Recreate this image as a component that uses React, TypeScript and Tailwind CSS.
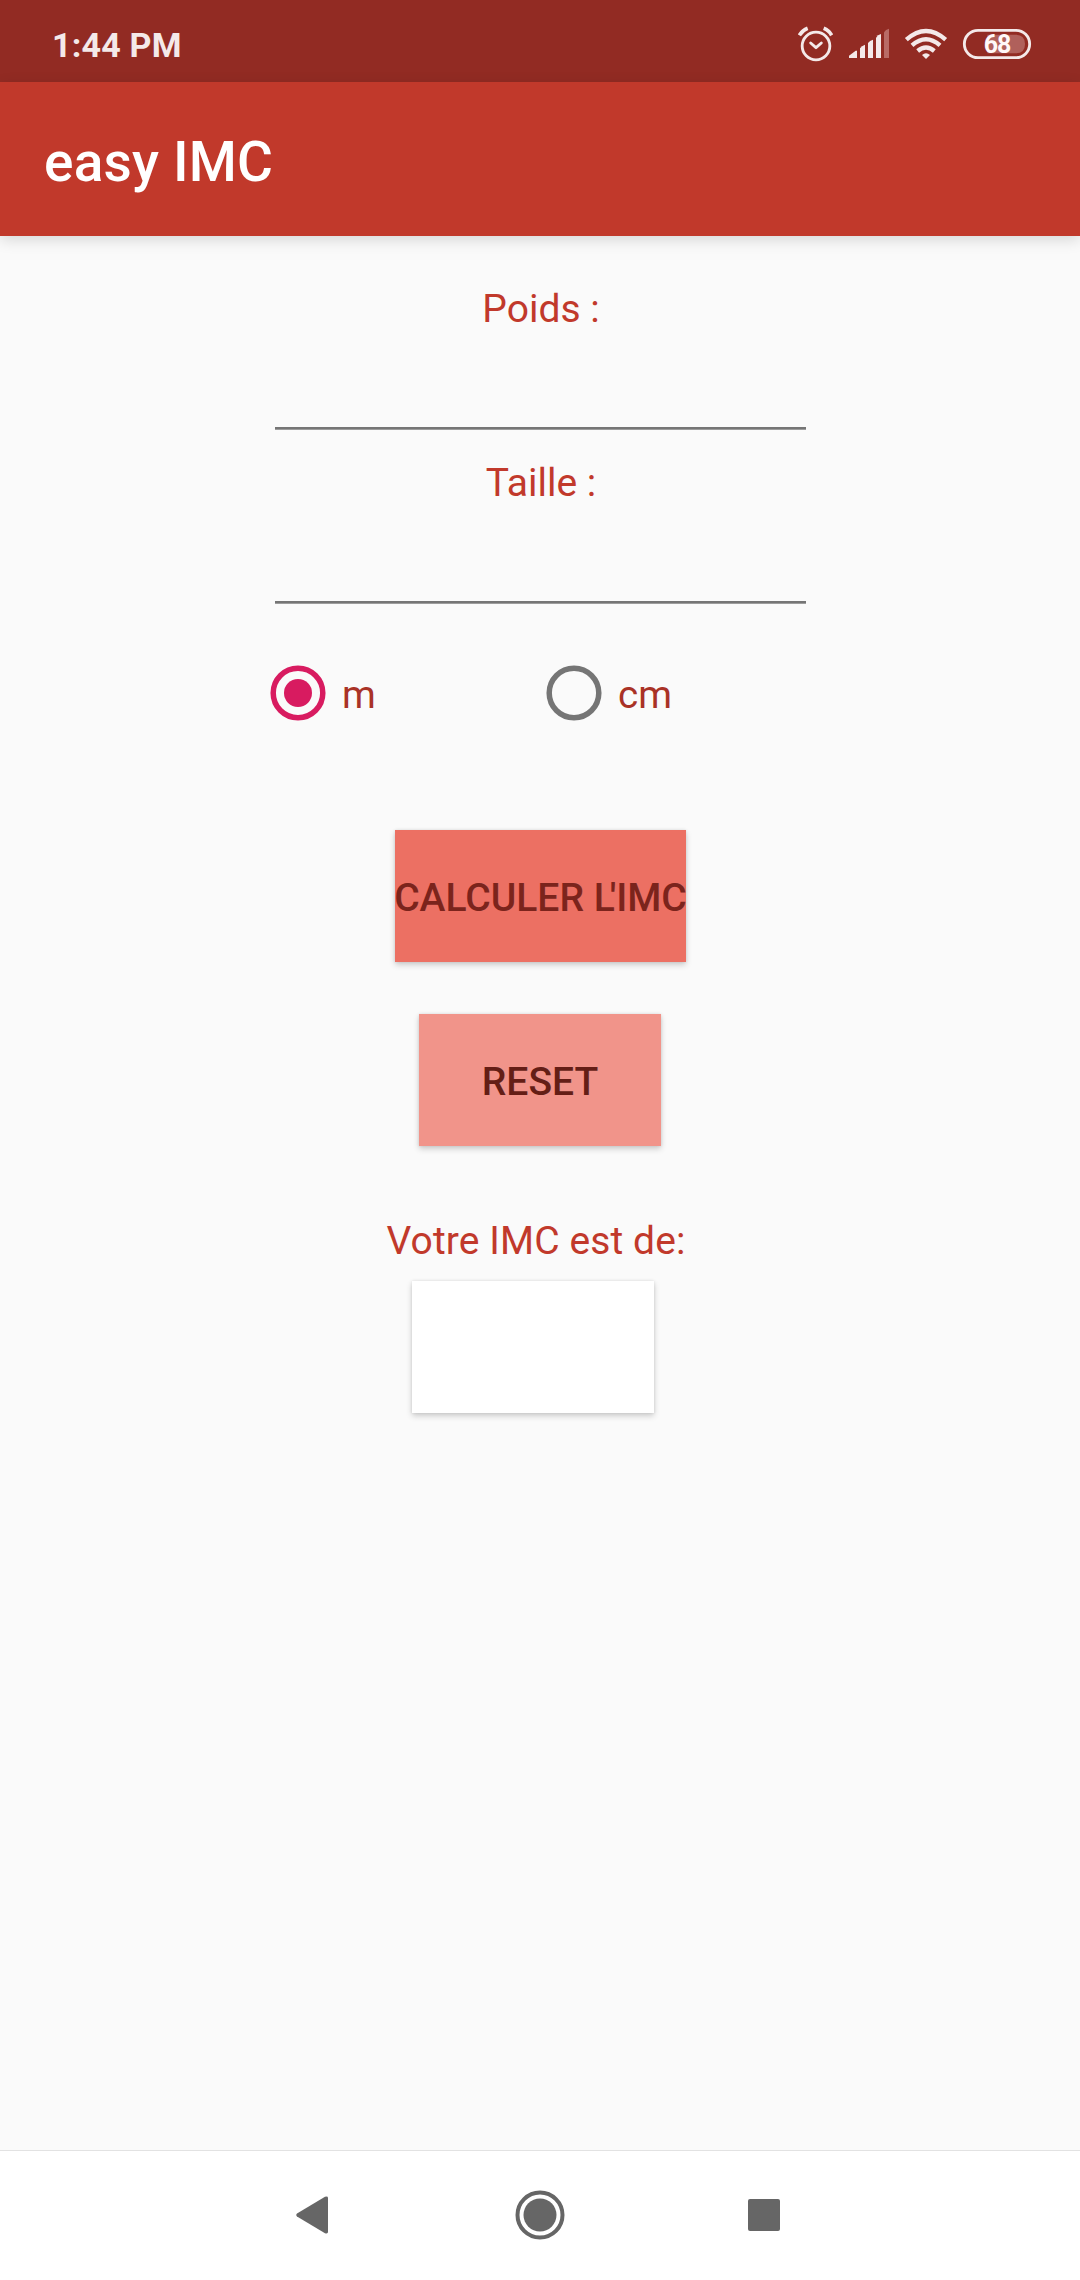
import React from "react";

function AlarmIcon() {
  return (
    <svg className="mt-[-2px] mr-px h-9 w-[35px]" viewBox="54 48 105 108" fill="none" stroke="#f4e9e9">
      <circle cx="108" cy="108" r="41.5" strokeWidth="8.5" />
      <path d="M92 99 L108 113 L124 99" strokeWidth="8.5" strokeLinecap="round" strokeLinejoin="round" />
      <path d="M58 76 Q67 61 83 55" strokeWidth="11" />
      <path d="M155 76 Q147 61 131 55" strokeWidth="11" />
    </svg>
  );
}

function SignalIcon() {
  return (
    <svg className="h-[31px] w-[42px]" viewBox="204 54 126 93" fill="#f4e9e9">
      <path d="M207 144 V137 L227 122 H231 V144 Z" />
      <path d="M240 144 V115 Q245 107 255 104 V144 Z" />
      <path d="M264 144 V99 Q269 91 279 89 V144 Z" />
      <path d="M288 144 V83 Q293 74 303 72 V144 Z" />
      <path d="M312 144 V67 Q317 58 327 56 V144 Z" fill="#b96b66" />
    </svg>
  );
}

function WifiIcon() {
  return (
    <svg className="h-8 w-11" viewBox="372 54 132 96" fill="none" stroke="#f4e9e9" strokeWidth="13">
      <path d="M379 89 Q438 37 497 89" />
      <path d="M396 106 Q438 69 480 106" />
      <path d="M413 123 Q438 102 463 123" />
      <path d="M426 135 Q438 124 450 135 L438 147 Z" fill="#f4e9e9" stroke="none" />
    </svg>
  );
}

function BatteryIcon() {
  return (
    <svg className="h-8 w-[70px]" viewBox="546 54 210 96">
      <path d="M622 74 H707 Q735 74 735 102 Q735 130 707 130 H622 Z" fill="#b0605b" />
      <rect x="553" y="61" width="196" height="82" rx="41" fill="none" stroke="#f4e9e9" strokeWidth="8.5" />
      <text
        x="651"
        y="129"
        textAnchor="middle"
        fill="#fff8f8"
        fontFamily="Roboto, sans-serif"
        fontWeight="700"
        fontSize="75"
        letterSpacing="-3"
      >
        68
      </text>
    </svg>
  );
}

function Field({ label, className }: { label: string; className: string }) {
  return (
    <label className={`flex w-[531px] flex-col items-center ${className}`}>
      <span className="h-[52px] pl-0.5 leading-[52px]">{label}</span>
      <input className="h-[92px] w-full bg-transparent text-center outline-none" />
      <span className="h-[3px] w-full border-b border-[#9c9c9c] bg-[#757575]" />
    </label>
  );
}

function Radio({ label, checked }: { label: string; checked?: boolean }) {
  return (
    <div className="flex h-14 w-[276px] shrink-0 items-center gap-4 text-[38.5px] text-[#a93226]">
      <svg className="size-14" viewBox="0 0 56 56" fill="none">
        <circle cx="28" cy="28" r="24.8" stroke={checked ? "#d81b60" : "#757575"} strokeWidth="5.5" />
        {checked && <circle cx="28" cy="28" r="14" fill="#d81b60" />}
      </svg>
      <span className="pt-1 leading-[52px]">{label}</span>
    </div>
  );
}

const raised = "shadow-[0_3px_6px_rgba(0,0,0,0.18),0_0_3px_rgba(0,0,0,0.1)]";

export default function App() {
  return (
    <div className="flex h-[2280px] w-[1080px] flex-col bg-[#fafafa] font-['Roboto',sans-serif] text-[39px] text-[#c1392b]">
      <div className="flex h-[82px] shrink-0 items-start justify-between bg-[#922b23] pr-12 pl-[52px]">
        <span className="pt-[25px] text-[34px] leading-10 font-bold tracking-[0.2px] text-[#f4e9e9]">1:44 PM</span>
        <div className="flex items-start gap-3.5 pt-7">
          <AlarmIcon />
          <SignalIcon />
          <WifiIcon />
          <BatteryIcon />
        </div>
      </div>
      <header className="flex h-[154px] shrink-0 items-center bg-[#c1392b] pt-1.5 pl-11 text-[55px] font-medium tracking-[0.2px] text-white shadow-[0_4px_14px_rgba(0,0,0,0.14)]">
        <h1>easy IMC</h1>
      </header>
      <main className="flex grow flex-col items-center">
        <Field label="Poids :" className="mt-[47px]" />
        <Field label="Taille :" className="mt-[27px]" />
        <div className="mt-[61px] flex w-[540px]">
          <Radio label="m" checked />
          <Radio label="cm" />
        </div>
        <button className={`mt-[109px] ml-px flex h-[132px] w-[291px] items-center justify-center bg-[#ec7063] pt-1 font-medium whitespace-nowrap text-[#7b241c] ${raised}`}>
          <span>
            CALCULER <span className="tracking-[-5px]">L</span>'IMC
          </span>
        </button>
        <button className={`mt-[52px] h-[132px] w-[242px] bg-[#f1948a] pt-1 font-medium text-[#641e16] ${raised}`}>
          RESET
        </button>
        <p className="mt-[69px] mr-2 h-[52px] leading-[52px] tracking-[0.1px]">Votre IMC est de:</p>
        <output className={`mt-3.5 mr-3.5 h-[132px] w-[242px] bg-white ${raised}`} />
      </main>
      <nav className="flex h-[130px] shrink-0 items-center justify-center border-t border-[#e2e2e2] bg-white pr-[3px] pb-px">
        <svg className="mr-[187px] ml-[-2px] h-[38px] w-8" viewBox="0 0 32 38" fill="#666666">
          <path d="M1 17.5 L29 0.8 Q32 0 32 2 V36 Q32 38 29 37.2 L1 20.5 Q-.5 19 1 17.5 Z" />
        </svg>
        <svg className="size-[50px]" viewBox="0 0 50 50" fill="none">
          <circle cx="25" cy="25" r="22.5" stroke="#666666" strokeWidth="4" />
          <circle cx="25" cy="25" r="16.5" fill="#666666" />
        </svg>
        <div className="ml-[183px] size-8 rounded-[2px] bg-[#666666]" />
      </nav>
    </div>
  );
}
